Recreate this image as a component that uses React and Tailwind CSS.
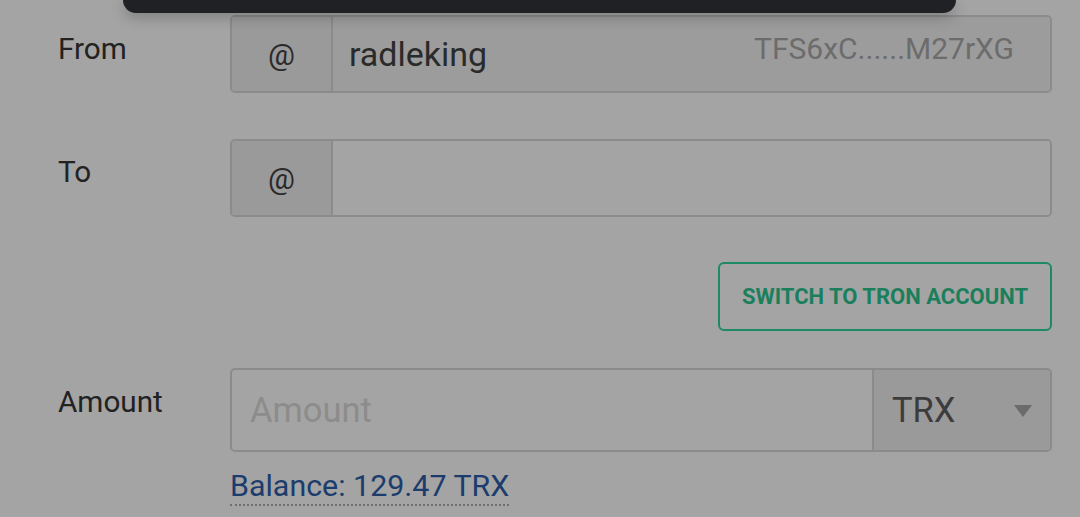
import React from 'react';

const font = { fontFamily: 'Roboto, "Noto Sans", sans-serif' };

function AtAddon() {
  return (
    <div className="w-[101px] shrink-0 flex items-center justify-center bg-[#9a9a9a] border-r-2 border-[#8b8b8b] text-[30px] text-[#2a2a2a]">
      @
    </div>
  );
}

export default function App() {
  return (
    <div className="relative w-[1080px] h-[517px] overflow-hidden bg-[#a4a4a4] text-[#222]" style={font}>
      {/* snackbar peeking from the top */}
      <div className="absolute top-0 left-[123px] w-[833px] h-[13px] bg-[#202124] rounded-b-[20px] shadow-[0_4px_14px_rgba(0,0,0,0.25)] z-10" />

      <div className="pl-[58px] pr-[28px] pt-[15px]">
        {/* From */}
        <div className="flex items-start">
          <label className="w-[172px] shrink-0 pt-[18px] text-[29.7px] leading-[32px]">From</label>
          <div className="flex-1 h-[78px] flex border-2 border-[#8b8b8b] rounded-[5px] overflow-hidden">
            <AtAddon />
            <div className="flex-1 flex bg-[#9c9c9c]">
              <span className="flex-1 self-center pl-[16px] text-[34px] leading-[40px] text-[#2a2a2a]">radleking</span>
              <span className="self-start mt-[14px] pr-[36px] text-[30px] leading-[36px] text-[#6c6c6c]">TFS6xC......M27rXG</span>
            </div>
          </div>
        </div>

        {/* To */}
        <div className="flex items-start mt-[46px]">
          <label className="w-[172px] shrink-0 pt-[17px] text-[29.7px] leading-[32px]">To</label>
          <div className="flex-1 h-[78px] flex border-2 border-[#8b8b8b] rounded-[5px] overflow-hidden">
            <AtAddon />
            <div className="flex-1 bg-[#a4a4a4]" />
          </div>
        </div>

        {/* switch button */}
        <div className="flex justify-end mt-[45px]">
          <button className="w-[334px] h-[69px] border-2 border-[#1e8a64] rounded-[6px] text-[22px] font-bold text-[#1b7f5c]">
            SWITCH TO TRON ACCOUNT
          </button>
        </div>

        {/* Amount */}
        <div className="flex items-start mt-[37px]">
          <label className="w-[172px] shrink-0 pt-[18px] text-[29.7px] leading-[32px]">Amount</label>
          <div className="flex-1">
            <div className="h-[84px] flex border-2 border-[#8b8b8b] rounded-[5px] overflow-hidden">
              <div className="flex-1 flex items-center pl-[18px] pt-[2px] text-[34.5px] text-[#8c8c8c]">Amount</div>
              <div className="w-[178px] shrink-0 flex items-center justify-between pl-[18px] pr-[18px] pt-[2px] bg-[#9a9a9a] border-l-2 border-[#8b8b8b]">
                <span className="text-[34.5px] text-[#3c3c3c]">TRX</span>
                <svg width="18" height="12" viewBox="0 0 18 12">
                  <path d="M0 0 H18 L9 12 Z" fill="#6b6b6b" />
                </svg>
              </div>
            </div>
            <div className="mt-[16px]">
              <span className="inline-block text-[30.4px] leading-[36px] text-[#1b3c6c] border-b-2 border-dotted border-[#6f6f6f]">
                Balance: 129.47 TRX
              </span>
            </div>
          </div>
        </div>
      </div>
    </div>
  );
}
